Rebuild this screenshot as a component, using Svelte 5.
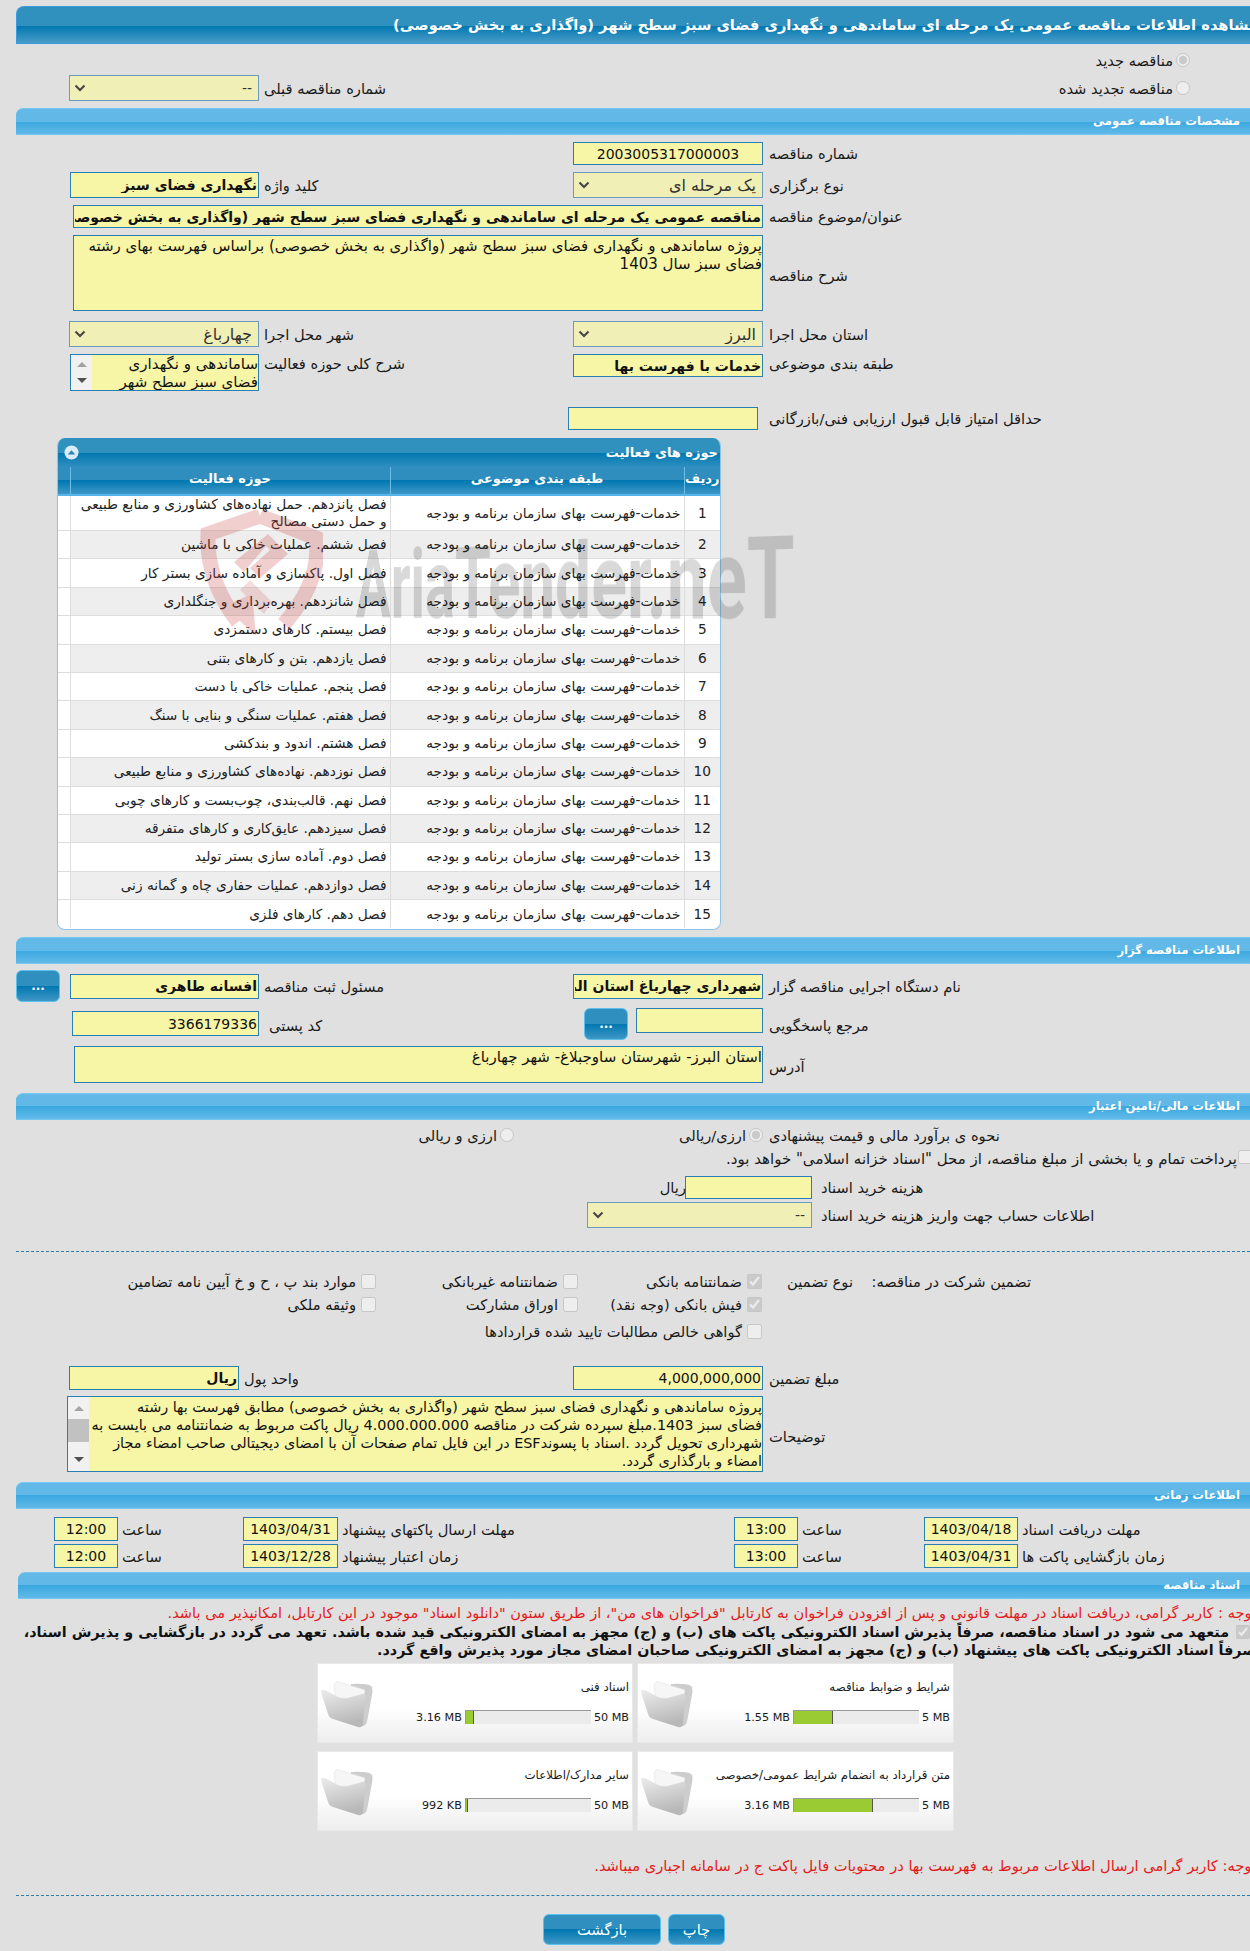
<script>
  const sub = 'خدمات-فهرست بهای سازمان برنامه و بودجه';
  const rows = [
    'فصل پانزدهم. حمل نهاده‌های کشاورزی و منابع طبیعی و حمل دستی مصالح',
    'فصل ششم. عملیات خاکی با ماشین',
    'فصل اول. پاکسازی و آماده سازی بستر کار',
    'فصل شانزدهم. بهره‌برداری و جنگلداری',
    'فصل بیستم. کارهای دستمزدی',
    'فصل یازدهم. بتن و کارهای بتنی',
    'فصل پنجم. عملیات خاکی با دست',
    'فصل هفتم. عملیات سنگی و بنایی با سنگ',
    'فصل هشتم. اندود و بندکشی',
    'فصل  نوزدهم. نهاده‌های کشاورزی و منابع طبیعی',
    'فصل نهم. قالب‌بندی، چوب‌بست و کارهای چوبی',
    'فصل سیزدهم. عایق‌کاری و کارهای متفرقه',
    'فصل دوم. آماده سازی بستر تولید',
    'فصل دوازدهم. عملیات حفاری چاه و گمانه زنی',
    'فصل دهم. کارهای فلزی'
  ];
  const tiles = [
    { t: 'شرایط و ضوابط مناقصه', max: '5 MB', val: '1.55 MB', pct: 31 },
    { t: 'اسناد فنی', max: '50 MB', val: '3.16 MB', pct: 6.3 },
    { t: 'متن قرارداد به انضمام شرایط عمومی/خصوصی', max: '5 MB', val: '3.16 MB', pct: 63 },
    { t: 'سایر مدارک/اطلاعات', max: '50 MB', val: '992 KB', pct: 2 }
  ];
  const desc = 'پروژه ساماندهی و نگهداری فضای سبز سطح شهر (واگذاری به بخش خصوصی) براساس فهرست بهای رشته فضای سبز سال 1403';
  const desc2 = 'پروژه ساماندهی و نگهداری فضای سبز سطح شهر (واگذاری به بخش خصوصی) مطابق فهرست بها رشته\nفضای سبز 1403.مبلغ سپرده شرکت در مناقصه 4.000.000.000 ریال پاکت مربوط به ضمانتنامه می بایست به شهرداری تحویل گردد .اسناد با پسوندESF در این فایل تمام صفحات آن با امضای دیجیتالی صاحب امضاء مجاز امضاء و بارگذاری گردد.';
  const scope = 'ساماندهی و نگهداری فضای سبز سطح شهر';
  const addr = 'استان البرز- شهرستان ساوجبلاغ- شهر چهارباغ';
</script>

<div class="page" dir="rtl">
  <div class="title"><span>مشاهده اطلاعات مناقصه عمومی یک مرحله ای ساماندهی و نگهداری فضای سبز سطح شهر (واگذاری به بخش خصوصی)</span></div>

  <div class="r1 radioline"><input type="radio" checked disabled name="a" /><span>مناقصه جدید</span></div>
  <div class="row r2">
    <div class="radioline inset"><input type="radio" disabled name="a" /><span>مناقصه تجدید شده</span></div>
    <div></div>
    <div class="lab l2 wide-left">شماره مناقصه قبلی</div>
    <div class="sel"><select disabled><option>--</option></select><svg viewBox="0 0 12 8"><path d="M1.5 1.5 6 6l4.5-4.5" /></svg></div>
  </div>

  <div class="sec s1">مشخصات مناقصه عمومی</div>

  <div class="row h23 m7">
    <div class="lab">شماره مناقصه</div>
    <input class="in num" readonly value="2003005317000003" />
  </div>
  <div class="row h26 m7">
    <div class="lab">نوع برگزاری</div>
    <div class="sel big"><select disabled><option>یک مرحله ای</option></select><svg viewBox="0 0 12 8"><path d="M1.5 1.5 6 6l4.5-4.5" /></svg></div>
    <div class="lab l2">کلید واژه</div>
    <input class="in bold short" readonly value="نگهداری فضای سبز" />
  </div>
  <div class="row h23 m7">
    <div class="lab">عنوان/موضوع مناقصه</div>
    <input class="in bold span3 subj" readonly value="مناقصه عمومی یک مرحله ای ساماندهی و نگهداری فضای سبز سطح شهر (واگذاری به بخش خصوصی)" />
  </div>
  <div class="row h76 m7">
    <div class="lab down">شرح مناقصه</div>
    <textarea class="in ta span3" readonly value={desc}></textarea>
  </div>
  <div class="row h26 m10">
    <div class="lab">استان محل اجرا</div>
    <div class="sel big"><select disabled><option>البرز</option></select><svg viewBox="0 0 12 8"><path d="M1.5 1.5 6 6l4.5-4.5" /></svg></div>
    <div class="lab l2">شهر محل اجرا</div>
    <div class="sel big"><select disabled><option>چهارباغ</option></select><svg viewBox="0 0 12 8"><path d="M1.5 1.5 6 6l4.5-4.5" /></svg></div>
  </div>
  <div class="row h37 m7 top">
    <div class="lab tl">طبقه بندی موضوعی</div>
    <input class="in bold h23i" readonly value="خدمات با فهرست بها" />
    <div class="lab l2 tl">شرح کلی حوزه فعالیت</div>
    <div class="tawrap small">
      <textarea class="ta2" readonly value={scope}></textarea>
      <div class="sb"><i class="up"></i><i class="dn"></i></div>
    </div>
  </div>
  <div class="row h23 m16">
    <div class="lab">حداقل امتیاز قابل قبول ارزیابی فنی/بازرگانی</div>
    <input class="in shift" readonly />
  </div>

  <div class="panel">
    <div class="phead">
      <span>حوزه های فعالیت</span>
      <svg class="collapse" viewBox="0 0 16 16"><circle cx="8" cy="8" r="7.5" fill="#d9ecf7" /><path d="M4 10 8 5.5 12 10Z" fill="#2b84b5" /></svg>
    </div>
    <table>
      <thead><tr><th class="c1">ردیف</th><th class="c2">طبقه بندی موضوعی</th><th class="c3">حوزه فعالیت</th><th class="c4"></th></tr></thead>
      <tbody>
        {#each rows as r, i}
          <tr class:alt={i % 2 === 1} class:first={i === 0}>
            <td class="c1 n">{i + 1}</td><td class="c2">{sub}</td><td class="c3">{r}</td><td class="c4"></td>
          </tr>
        {/each}
      </tbody>
    </table>
  </div>

  <div class="sec s2">اطلاعات مناقصه گزار</div>
  <div class="row h32 m6 mid">
    <div class="lab">نام دستگاه اجرایی مناقصه گزار</div>
    <input class="in bold h25" readonly value="شهرداری چهارباغ استان البرز" />
    <div class="lab l2">مسئول ثبت مناقصه</div>
    <input class="in bold h25 short" readonly value="افسانه طاهری" />
    <button class="btn dots">...</button>
  </div>
  <div class="row h32 m6 top">
    <div class="lab tl3">مرجع پاسخگویی</div>
    <div class="pair"><input class="in h25" readonly /><button class="btn dots b2">...</button></div>
    <div class="lab l2 tl3 pl7">کد پستی</div>
    <input class="in h25 mt3 post" readonly value="3366179336" />
  </div>
  <div class="row h37 m6">
    <div class="lab low">آدرس</div>
    <textarea class="in ta span3 addr" readonly value={addr}></textarea>
  </div>

  <div class="sec s3">اطلاعات مالی/تامین اعتبار</div>
  <div class="row h20 m5">
    <div class="lab">نحوه ی برآورد مالی و قیمت پیشنهادی</div>
    <div class="opts">
      <div class="radioline o1"><input type="radio" checked disabled name="b" /><span>ارزی/ریالی</span></div>
      <div class="radioline"><input type="radio" disabled name="b" /><span>ارزی و ریالی</span></div>
    </div>
  </div>
  <div class="treasury"><input type="checkbox" disabled /><span>پرداخت تمام و یا بخشی از مبلغ مناقصه، از محل "اسناد خزانه اسلامی" خواهد بود.</span></div>
  <div class="flexrow cost">
    <div class="lab2">هزینه خرید اسناد</div>
    <input class="in w127" readonly />
    <span class="rial">ریال</span>
  </div>
  <div class="flexrow acc">
    <div class="lab2">اطلاعات حساب جهت واریز هزینه خرید اسناد</div>
    <div class="sel w225"><select disabled><option>--</option></select><svg viewBox="0 0 12 8"><path d="M1.5 1.5 6 6l4.5-4.5" /></svg></div>
  </div>
  <div class="dash d1"></div>

  <div class="grow g1">
    <div>تضمین شرکت در مناقصه:</div><div>نوع تضمین</div>
    <label class="cb"><input type="checkbox" checked disabled /><span>ضمانتنامه بانکی</span></label>
    <label class="cb"><input type="checkbox" disabled /><span>ضمانتنامه غیربانکی</span></label>
    <label class="cb"><input type="checkbox" disabled /><span>موارد بند پ ، ح و خ آیین نامه تضامین</span></label>
  </div>
  <div class="grow g2">
    <div></div><div></div>
    <label class="cb"><input type="checkbox" checked disabled /><span>فیش بانکی (وجه نقد)</span></label>
    <label class="cb"><input type="checkbox" disabled /><span>اوراق مشارکت</span></label>
    <label class="cb"><input type="checkbox" disabled /><span>وثیقه ملکی</span></label>
  </div>
  <div class="grow g3">
    <div></div><div></div>
    <label class="cb whole"><input type="checkbox" disabled /><span>گواهی خالص مطالبات تایید شده قراردادها</span></label>
  </div>

  <div class="row q h24">
    <div class="lab">مبلغ تضمین</div>
    <input class="in amount" readonly value="4,000,000,000" />
    <div class="lab l2">واحد پول</div>
    <input class="in bold" readonly value="ریال" />
  </div>
  <div class="row h76 m6">
    <div class="lab down">توضیحات</div>
    <div class="tawrap notes">
      <textarea class="ta2" readonly value={desc2}></textarea>
      <div class="sb"><i class="up"></i><b></b><i class="dn"></i></div>
    </div>
  </div>

  <div class="sec s3">اطلاعات زمانی</div>
  <div class="times m8">
    <div class="tl4">مهلت دریافت اسناد</div><input class="in t" readonly value="1403/04/18" /><div class="tl4">ساعت</div><input class="in t" readonly value="13:00" />
    <div class="tl4">مهلت ارسال پاکتهای پیشنهاد</div><input class="in t" readonly value="1403/04/31" /><div class="tl4">ساعت</div><input class="in t" readonly value="12:00" />
  </div>
  <div class="times m3">
    <div class="tl4">زمان بازگشایی پاکت ها</div><input class="in t" readonly value="1403/04/31" /><div class="tl4">ساعت</div><input class="in t" readonly value="13:00" />
    <div class="tl4">زمان اعتبار پیشنهاد</div><input class="in t" readonly value="1403/12/28" /><div class="tl4">ساعت</div><input class="in t" readonly value="12:00" />
  </div>

  <div class="sec s4">اسناد مناقصه</div>
  <div class="red r-a">توجه : کاربر گرامی، دریافت اسناد در مهلت قانونی و پس از افزودن فراخوان به کارتابل "فراخوان های من"، از طریق ستون "دانلود اسناد" موجود در این کارتابل، امکانپذیر می باشد.</div>
  <div class="pledge"><input type="checkbox" checked disabled /> متعهد می شود در اسناد مناقصه، صرفاً پذیرش اسناد الکترونیکی پاکت های (ب) و (ج) مجهز به امضای الکترونیکی قید شده باشد. تعهد می گردد در بازگشایی و پذیرش اسناد، صرفاً اسناد الکترونیکی پاکت های پیشنهاد (ب) و (ج) مجهز به امضای الکترونیکی صاحبان امضای مجاز مورد پذیرش واقع گردد.</div>

  <div class="tiles">
    {#each tiles as f}
      <div class="tile">
        <div class="tinfo">
          <div class="ttl">{f.t}</div>
          <div class="prog">
            <span dir="ltr">{f.max}</span>
            <div class="bar" dir="ltr"><div class="fill" style="width:{f.pct}%"></div></div>
            <span dir="ltr">{f.val}</span>
          </div>
        </div>
        <svg class="folder" viewBox="0 0 52 48">
          <defs><linearGradient id="fg" x1="0" y1="0" x2="0.3" y2="1"><stop offset="0" stop-color="#ececec" /><stop offset="1" stop-color="#b8b8b8" /></linearGradient></defs>
          <path d="M30 3Q49 2 51 6Q52 9 51 14L46 41Q44 46 40 45L30 40Z" fill="#cdcdcd" />
          <path d="M13 4Q14 0 18 1L44 9L38 36L16 26Z" fill="#f6f6f6" stroke="#e4e4e4" stroke-width=".6" />
          <path d="M0 11Q0 8 4 9L15 15Q22 19 30 16L41 13Q44 12 44 16L42 43Q41 47 37 46L12 38Q8 37 7 33Z" fill="url(#fg)" />
        </svg>
      </div>
    {/each}
  </div>

  <div class="red r-b">توجه: کاربر گرامی ارسال اطلاعات مربوط به فهرست بها در محتویات فایل پاکت ج در سامانه اجباری میباشد.</div>
  <div class="dash d2"></div>
  <div class="actions">
    <button class="btn act print">چاپ</button>
    <button class="btn act back">بازگشت</button>
  </div>

  <div class="wm" aria-hidden="true">
    <svg class="shield" viewBox="0 0 123 127">
      <path d="M60 6 8 24Q6 70 38 112" fill="none" stroke="#c83c3c" stroke-width="15" />
      <path d="M60 6 116 28Q122 70 84 114" fill="none" stroke="#c83c3c" stroke-width="15" />
      <path d="M24 96 56 126 52 84Z" fill="#c83c3c" />
      <path d="M34 52 68 24 88 44 60 68 50 58 70 40 66 36 44 62Z" fill="#c83c3c" />
      <path d="M50 70 72 92 64 104 40 80Z" fill="#c83c3c" opacity=".7" />
    </svg>
    <span class="wmt">AriaTender.neT</span>
  </div>
</div>

<style>
  :global(body) { margin: 0; background: #e0e0e0; }
  .page { position: relative; width: 1250px; height: 1951px; overflow: hidden; font-family: "DejaVu Sans", sans-serif; font-size: 14.67px; color: #1a1a1a; }

  .title { margin: 6px 0 0 16px; height: 38px; box-sizing: border-box; border: 1px solid #3a9be0; border-right: 0; border-top-left-radius: 8px; background: linear-gradient(#3090be 0 52%, #0077b0 52%, #4a9cc8 100%); color: #fff; font-weight: bold; font-size: 14.67px; line-height: 36px; white-space: nowrap; overflow: hidden; }
  .title span { display: block; margin-right: -8px; }

  .sec { margin-left: 16px; height: 27px; box-sizing: border-box; border-top: 1px solid #74c8f2; border-bottom: 1px solid #74c8f2; border-top-left-radius: 7px; background: linear-gradient(#62b9e8 0 50%, #3aa8df 50%, #62b9e8 100%); color: #fff; font-weight: bold; font-size: 11.6px; line-height: 25px; padding-right: 10px; }
  .s1 { margin-top: 7px; }
  .s2 { margin-top: 7px; }
  .s3 { margin-top: 10px; }
  .s4 { margin: 4px 0 0 18px; }

  .radioline { display: flex; align-items: center; gap: 3px; white-space: nowrap; }
  .radioline input { margin: 0; width: 14px; height: 14px; }
  .r1 { margin-top: 6px; height: 20px; padding-right: 60px; }
  .inset { padding-right: 60px; }
  .r2 { margin-top: 5px; height: 26px; }

  .row { display: grid; grid-template-columns: 487px 190px 314px 190px 69px; align-items: center; }
  .h20 { height: 20px; } .h23 { height: 23px; } .h24 { height: 24px; } .h26 { height: 26px; } .h32 { height: 32px; } .h37 { height: 37px; } .h76 { height: 76px; }
  .m3 { margin-top: 3px; } .m5 { margin-top: 5px; } .m6 { margin-top: 6px; } .m7 { margin-top: 7px; } .m8 { margin-top: 8px; } .m10 { margin-top: 10px; } .m16 { margin-top: 16px; }
  .top { align-items: start; }
  .lab { text-align: left; padding-left: 6px; white-space: nowrap; }
  .l2 { padding-left: 5px; }
  .tl { margin-top: 1px; }
  .tl3 { margin-top: 9px; }
  .pl7 { padding-left: 10px; }
  .low { margin-top: 4px; }
  .down { margin-top: 5px; }

  .in { box-sizing: border-box; width: 100%; height: 100%; border: 1px solid #2a7fb2; background: #f7f5a6; font-family: "DejaVu Sans", sans-serif; font-size: 14px; color: #111; padding: 0 1px; margin: 0; outline: none; border-radius: 0; min-width: 0; }
  .bold { font-weight: bold; font-size: 14px; }
  .num { text-align: center; font-size: 14px; }
  .short { width: 189px; margin-left: 1px; }
  .span3 { grid-column: span 3; }
  .subj { width: auto; margin-left: 4px; }
  .ta { resize: none; width: auto; margin-left: 4px; line-height: 18px; padding: 1px 0 0 8px; display: block; overflow: hidden; font-size: 15px; }
  .addr { margin-left: 5px; }
  .h23i { height: 23px; }
  .h25 { height: 25px; }
  .mt3 { margin-top: 3px; }
  .post { width: 187px; margin-left: 3px; font-size: 14px; text-align: right; }
  .shift { margin-right: 5px; margin-left: -5px; }

  .sel { position: relative; height: 26px; }
  .sel select { appearance: none; -webkit-appearance: none; box-sizing: border-box; width: 100%; height: 100%; margin: 0; border: 1px solid #6a9bbd; border-radius: 0; background: #f0efb5; font-family: "DejaVu Sans", sans-serif; font-size: 14px; color: #333; opacity: 1; padding: 0 6px; }
  .sel.big select { font-size: 16px; }
  .sel svg { position: absolute; left: 5px; top: 9px; width: 12px; height: 8px; fill: none; stroke: #444; stroke-width: 2; }
  .w225 { width: 225px; }

  .tawrap { display: flex; box-sizing: border-box; border: 1px solid #2a7fb2; background: #f7f5a6; height: 100%; overflow: hidden; }
  .small { width: 189px; margin-left: 1px; }
  .notes { grid-column: span 3; margin-left: -2px; }
  .ta2 { flex: 1; min-width: 0; border: 0; background: transparent; resize: none; padding: 1px 0 0 1.5px; margin: 0; outline: none; font-family: "DejaVu Sans", sans-serif; font-size: 14.4px; line-height: 18px; color: #111; overflow: hidden; }
  .sb { width: 21px; flex: none; background: #f1f1f1; display: flex; flex-direction: column; align-items: center; justify-content: space-between; padding: 7px 0; box-sizing: border-box; }
  .small .ta2 { padding: 0; font-size: 15px; }
  .sb i { width: 0; height: 0; border-left: 5px solid transparent; border-right: 5px solid transparent; }
  .sb b { width: 21px; height: 23px; background: #c1c1c1; flex: none; margin-top: 8px; }
  .notes .sb { justify-content: flex-start; padding: 9px 0; }
  .notes .sb .dn { margin-top: auto; }
  .sb .up { border-bottom: 5px solid #a3a3a3; }
  .sb .dn { border-top: 5px solid #505050; }

  .panel { margin: 8px 529px 0 57px; height: 492px; box-sizing: border-box; border: 1px solid #8ec4e4; border-top: 0; border-radius: 8px; background: #fff; overflow: hidden; }
  .phead { height: 29px; background: linear-gradient(#3090be 0 50%, #0077b0 50%, #2f8ebf 100%); color: #fff; font-weight: bold; font-size: 13px; line-height: 28px; padding: 0 2px; display: flex; justify-content: space-between; align-items: center; }
  .collapse { width: 15px; height: 15px; margin-left: 4px; }
  table { width: 100%; border-collapse: collapse; table-layout: fixed; font-size: 13.7px; }
  th { height: 28px; box-sizing: border-box; background: linear-gradient(#2f8ebe 0 50%, #0077b0 50%, #3f97c6 100%); color: #fff; font-size: 13px; font-weight: bold; border-left: 1px solid #6cbde8; border-bottom: 2px solid #55b4e8; padding: 0 0 4px; }
  td { height: 28.4px; box-sizing: border-box; border-top: 1px solid #ddd; border-left: 1px solid #ddd; padding: 0 3px; text-align: right; line-height: 17px; color: #222; }
  tr.first td { height: 35px; border-top: 0; }
  tr.alt td { background: #eee; }
  .c1 { width: 36px; } .c2 { width: 294px; } .c3 { width: 320px; } .c4 { width: 13px; border-left: 0; }
  td.c4 { background: #fff !important; }
  .n { text-align: center; font-size: 13.7px; padding: 0; }

  .btn { box-sizing: border-box; border: 1px solid #5cc0ee; border-radius: 6px; background: linear-gradient(#2f8fbe 0 50%, #0077b0 50%, #3f97c6 100%); color: #fff; font-family: "DejaVu Sans", sans-serif; padding: 0; margin: 0; }
  .dots { width: 44px; height: 32px; margin-left: 16px; justify-self: end; font-weight: bold; font-size: 12px; }
  .b2 { margin: 0; flex: none; }
  .pair { display: flex; gap: 8px; margin-left: -22px; width: 179px; }
  .pair .in { width: 127px; flex: none; }

  .opts { grid-column: span 4; display: flex; }
  .o1 { width: 249px; flex: none; }
  .treasury { margin: 5px -2px 0 0; height: 22px; display: flex; gap: 1px; align-items: flex-start; white-space: nowrap; font-size: 15px; }
  .treasury input { margin: 0; width: 14px; height: 14px; flex: none; }
  .flexrow { display: flex; align-items: center; }
  .lab2 { width: 438px; box-sizing: border-box; text-align: left; padding-left: 9px; flex: none; white-space: nowrap; }
  .cost { height: 23px; margin-top: 4px; }
  .w127 { width: 127px; }
  .rial { margin-right: -1px; }
  .acc { height: 26px; margin-top: 3px; }

  .dash { margin-left: 16px; border-top: 1px dashed #2a7fb2; }
  .d1 { margin-top: 23px; }
  .d2 { margin-top: 19px; }

  .grow { display: grid; grid-template-columns: 219px 178px 91px 184px 202px 1fr; height: 20px; align-items: center; white-space: nowrap; }
  .grow > div:first-child { grid-column: 2; }
  .grow > div:nth-child(2) { grid-column: 3; }
  .grow > div:empty { display: none; }
  .grow .cb { display: flex; align-items: center; gap: 5px; }
  .grow .cb:first-of-type { grid-column: 4; }
  .cb input { margin: 0; width: 15px; height: 15px; flex: none; }
  .g1 { margin-top: 19px; } .g2 { margin-top: 3px; } .g3 { margin-top: 7px; }
  .whole { grid-column: 4 / 7; }
  .q { margin-top: 25px; grid-template-columns: 487px 190px 334px 170px 69px; }
  .amount { font-size: 14px; }

  .times { display: grid; grid-template-columns: 232px 94px 126px 64px 396px 95px 125px 64px 54px; height: 24px; align-items: center; white-space: nowrap; }
  .t { text-align: center; font-size: 14px; padding: 0; }
  .tl4 { text-align: left; padding-left: 4px; }

  .red { color: #e31b1b; white-space: nowrap; margin-right: -6px; font-size: 14.67px; }
  .r-a { margin-top: 5px; height: 18px; line-height: 18px; font-size: 14.55px; }
  .pledge { margin: 1px -6px 0 0; width: 1252px; line-height: 18px; font-weight: bold; font-size: 14.3px; color: #111; }
  .pledge input { margin: 0 6px 0 2px; width: 14px; height: 14px; vertical-align: -2px; }

  .tiles { margin: 4px 296px 0 317px; display: grid; grid-template-columns: 317px 316px; gap: 8px 4px; }
  .tile { height: 80px; box-sizing: border-box; border: 1px solid #e8e8e8; background: linear-gradient(#fff 55%, #eee 100%); display: flex; padding: 0 3px 0 0; font-size: 11.2px; }
  .tinfo { flex: 1; }
  .ttl { margin-top: 15px; height: 17px; line-height: 17px; white-space: nowrap; font-size: 11.8px; }
  .prog { margin-top: 14px; display: flex; align-items: center; height: 14px; gap: 3px; white-space: nowrap; }
  .bar { width: 126px; height: 14px; box-sizing: border-box; background: #ebebeb; border-top: 1px solid #999; border-left: 1px solid #999; flex: none; }
  .fill { height: 100%; background: #9bcb32; border-right: 1px solid #555; box-sizing: border-box; }
  .folder { width: 52px; height: 48px; margin: 17px 0 0 3px; flex: none; }

  .r-b { margin-top: 25px; height: 20px; line-height: 20px; }
  .actions { margin-top: 18px; padding-right: 525px; display: flex; gap: 7px; }
  .act { height: 31px; color: #fff; font-size: 14.67px; }
  .print { width: 57px; }
  .back { width: 118px; }

  .wm { position: absolute; left: 200px; top: 510px; width: 620px; height: 130px; pointer-events: none; }
  .shield { position: absolute; left: 0; top: 0; width: 123px; height: 127px; opacity: .24; }
  .wmt { position: absolute; left: -8px; bottom: 5px; font-family: Roboto, sans-serif; font-weight: 700; font-size: 104px; line-height: 1; color: rgba(0, 0, 0, .15); direction: ltr; white-space: nowrap; transform-origin: 50% 82%; transform: perspective(900px) rotateY(-24deg) scaleX(.66); }
</style>
